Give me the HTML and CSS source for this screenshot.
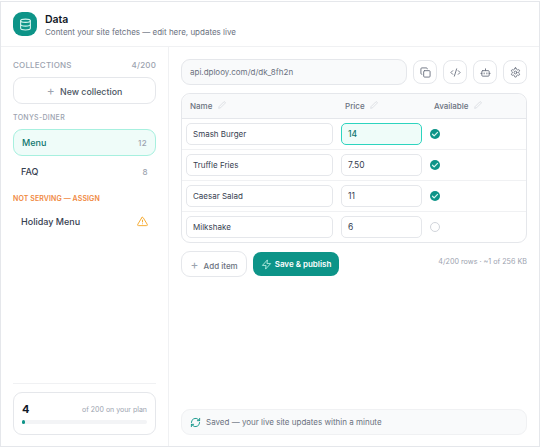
FILE: index.html
```html
<!DOCTYPE html>
<html lang="en">
<head>
  <meta charset="UTF-8">
  <title>Data</title>
  <link rel="stylesheet" href="styles.css">
</head>
<body>
  <div class="frame">
    <header class="top">
      <div class="logo">
        <svg width="13" height="13" viewBox="0 0 24 24" fill="none" stroke="#d7f5ee" stroke-width="2" stroke-linecap="round" stroke-linejoin="round"><ellipse cx="12" cy="5" rx="9" ry="3"/><path d="M3 5v14c0 1.700 4 3 9 3s9-1.300 9-3V5"/><path d="M3 12c0 1.700 4 3 9 3s9-1.300 9-3"/></svg>
      </div>
      <div class="top-text">
        <h1>Data</h1>
        <p>Content your site fetches — edit here, updates live</p>
      </div>
    </header>

    <div class="columns">
      <aside class="side">
        <div class="side-head"><span>COLLECTIONS</span><span>4/200</span></div>
        <button class="new-btn"><span class="plus">+</span> New collection</button>
        <div class="group-label">TONYS-DINER</div>
        <div class="item active"><span>Menu</span><span class="count">12</span></div>
        <div class="item"><span>FAQ</span><span class="count">8</span></div>
        <div class="group-label warn">NOT SERVING — ASSIGN</div>
        <div class="item">
          <span>Holiday Menu</span>
          <svg width="11" height="11" viewBox="0 0 24 24" fill="none" stroke="#f5a524" stroke-width="2" stroke-linecap="round" stroke-linejoin="round"><path d="M10.300 3.900 1.800 18a2 2 0 0 0 1.700 3h17a2 2 0 0 0 1.700-3L13.700 3.900a2 2 0 0 0-3.400 0z"/><path d="M12 9v4"/><path d="M12 17h.01"/></svg>
        </div>
        <div class="side-foot">
          <div class="plan">
            <div class="plan-row"><strong>4</strong><span>of 200 on your plan</span></div>
            <div class="track"><div class="fill" style="width:2%"></div></div>
          </div>
        </div>
      </aside>

      <main class="main">
        <div class="url-row">
          <div class="url">api.dplooy.com/d/dk_8fh2n</div>
          <button class="icon-btn">
            <svg width="11" height="11" viewBox="0 0 24 24" fill="none" stroke="#6b7280" stroke-width="2" stroke-linecap="round" stroke-linejoin="round"><rect x="8" y="8" width="14" height="14" rx="2"/><path d="M4 16a2 2 0 0 1-2-2V4a2 2 0 0 1 2-2h10a2 2 0 0 1 2 2"/></svg>
          </button>
          <button class="icon-btn">
            <svg width="11" height="11" viewBox="0 0 24 24" fill="none" stroke="#6b7280" stroke-width="2" stroke-linecap="round" stroke-linejoin="round"><path d="m18 16 4-4-4-4"/><path d="m6 8-4 4 4 4"/><path d="m14.500 4-5 16"/></svg>
          </button>
          <button class="icon-btn">
            <svg width="11" height="11" viewBox="0 0 24 24" fill="none" stroke="#6b7280" stroke-width="2" stroke-linecap="round" stroke-linejoin="round"><path d="M12 8V4"/><rect x="4" y="8" width="16" height="12" rx="2"/><path d="M2 14h2"/><path d="M20 14h2"/><path d="M15 13v2"/><path d="M9 13v2"/></svg>
          </button>
          <button class="icon-btn">
            <svg width="11" height="11" viewBox="0 0 24 24" fill="none" stroke="#6b7280" stroke-width="2" stroke-linecap="round" stroke-linejoin="round"><path d="M12.220 2h-.44a2 2 0 0 0-2 2v.18a2 2 0 0 1-1 1.730l-.43.25a2 2 0 0 1-2 0l-.15-.08a2 2 0 0 0-2.730.73l-.22.380a2 2 0 0 0 .730 2.730l.15.100a2 2 0 0 1 1 1.720v.51a2 2 0 0 1-1 1.740l-.15.090a2 2 0 0 0-.73 2.730l.22.380a2 2 0 0 0 2.730.730l.15-.08a2 2 0 0 1 2 0l.43.250a2 2 0 0 1 1 1.730V20a2 2 0 0 0 2 2h.44a2 2 0 0 0 2-2v-.18a2 2 0 0 1 1-1.730l.43-.25a2 2 0 0 1 2 0l.15.080a2 2 0 0 0 2.730-.730l.22-.39a2 2 0 0 0-.730-2.730l-.15-.08a2 2 0 0 1-1-1.740v-.5a2 2 0 0 1 1-1.740l.15-.09a2 2 0 0 0 .730-2.730l-.22-.38a2 2 0 0 0-2.730-.730l-.15.080a2 2 0 0 1-2 0l-.43-.25a2 2 0 0 1-1-1.730V4a2 2 0 0 0-2-2z"/><circle cx="12" cy="12" r="3"/></svg>
          </button>
        </div>

        <div class="table">
          <div class="row head">
            <div class="col-name">Name <svg class="pen" width="8" height="8" viewBox="0 0 24 24" fill="none" stroke="#d1d5db" stroke-width="2"><path d="M17 3a2.800 2.800 0 1 1 4 4L7.500 20.500 2 22l1.500-5.500z"/></svg></div>
            <div class="col-price">Price <svg class="pen" width="8" height="8" viewBox="0 0 24 24" fill="none" stroke="#d1d5db" stroke-width="2"><path d="M17 3a2.800 2.800 0 1 1 4 4L7.500 20.500 2 22l1.500-5.500z"/></svg></div>
            <div>Available <svg class="pen" width="8" height="8" viewBox="0 0 24 24" fill="none" stroke="#d1d5db" stroke-width="2"><path d="M17 3a2.800 2.800 0 1 1 4 4L7.500 20.500 2 22l1.500-5.500z"/></svg></div>
          </div>
          <div class="row">
            <div class="cell col-name">Smash Burger</div>
            <div class="cell col-price focus">14</div>
            <span class="check"><svg width="10" height="10" viewBox="0 0 24 24" fill="none" stroke="#d7f5ee" stroke-width="3" stroke-linecap="round" stroke-linejoin="round"><path d="M6 12.500l4 4L18 8"/></svg></span>
          </div>
          <div class="row">
            <div class="cell col-name">Truffle Fries</div>
            <div class="cell col-price">7.50</div>
            <span class="check"><svg width="10" height="10" viewBox="0 0 24 24" fill="none" stroke="#d7f5ee" stroke-width="3" stroke-linecap="round" stroke-linejoin="round"><path d="M6 12.500l4 4L18 8"/></svg></span>
          </div>
          <div class="row">
            <div class="cell col-name">Caesar Salad</div>
            <div class="cell col-price">11</div>
            <span class="check"><svg width="10" height="10" viewBox="0 0 24 24" fill="none" stroke="#d7f5ee" stroke-width="3" stroke-linecap="round" stroke-linejoin="round"><path d="M6 12.500l4 4L18 8"/></svg></span>
          </div>
          <div class="row">
            <div class="cell col-name">Milkshake</div>
            <div class="cell col-price">6</div>
            <span class="check off"></span>
          </div>
        </div>

        <div class="actions">
          <button class="add-btn"><span class="plus">+</span> Add item</button>
          <button class="save-btn">
            <svg width="11" height="11" viewBox="0 0 24 24" fill="none" stroke="#b6ece0" stroke-width="2" stroke-linejoin="round"><path d="M3 14 14 2l-1 8h8L10 22l1-8z"/></svg>
            Save &amp; publish
          </button>
          <span class="usage">4/200 rows · ~1 of 256 KB</span>
        </div>

        <div class="status">
          <svg width="11" height="11" viewBox="0 0 24 24" fill="none" stroke="#0d9488" stroke-width="2" stroke-linecap="round" stroke-linejoin="round"><path d="M3 12a9 9 0 0 1 15-6.700L21 8"/><path d="M21 3v5h-5"/><path d="M21 12a9 9 0 0 1-15 6.700L3 16"/><path d="M8 16H3v5"/></svg>
          Saved — your live site updates within a minute
        </div>
      </main>
    </div>
  </div>
</body>
</html>
```

FILE: styles.css
```css
* {
  box-sizing: border-box;
}

body {
  margin: 0;
  height: 448px;
  padding: 1px 0;
  font-family: Inter, "Liberation Sans", sans-serif;
  background-color: #fff;
  color: #374151;
}

button {
  font-family: inherit;
  background: #fff;
  cursor: pointer;
}

.frame {
  height: 100%;
  display: flex;
  flex-direction: column;
  border: 1px solid #e5e7eb;
}

.top {
  height: 45px;
  flex: none;
  display: flex;
  align-items: center;
  gap: 8px;
  padding: 0 12px;
  border-bottom: 1px solid #f0f1f3;
}

.logo {
  width: 24px;
  height: 24px;
  border-radius: 9px;
  background-color: #0d9488;
  display: flex;
  align-items: center;
  justify-content: center;
}

.top-text {
  padding-top: 2px;
}

.top h1 {
  margin: 0;
  font-size: 10.500px;
  font-weight: 600;
  line-height: 14px;
  color: #111827;
}

.top p {
  margin: 0;
  font-size: 8px;
  line-height: 11px;
  color: #6b7280;
}

.columns {
  flex: 1;
  display: flex;
  min-height: 0;
}

.side {
  width: 168px;
  flex: none;
  display: flex;
  flex-direction: column;
  padding: 13px 12px 11px;
  border-right: 1px solid #f0f1f3;
}

.side-head {
  display: flex;
  justify-content: space-between;
  font-size: 8px;
  line-height: 11px;
  letter-spacing: 0.2px;
  font-weight: 500;
  color: #9ca3af;
}

.new-btn {
  height: 27px;
  margin-top: 6px;
  border: 1px solid #e5e7eb;
  border-radius: 9px;
  font-size: 8.800px;
  font-weight: 500;
  color: #4b5563;
}

.plus {
  font-size: 12px;
  font-weight: 400;
  color: #9ca3af;
  margin-right: 3px;
}

.group-label {
  margin: 9px 0 7px;
  font-size: 7px;
  line-height: 9px;
  letter-spacing: 0.3px;
  font-weight: 500;
  color: #9ca3af;
}

.group-label.warn {
  margin: 8px 0 5px;
  letter-spacing: 0.1px;
  font-weight: 600;
  color: #f0883e;
}

.item {
  height: 27px;
  display: flex;
  align-items: center;
  justify-content: space-between;
  padding: 0 8px;
  font-size: 9px;
  font-weight: 500;
  color: #374151;
  border-radius: 9px;
  margin-bottom: 1px;
}

.item.active {
  background-color: #effcf9;
  border: 1px solid #a7f0df;
  color: #0f766e;
  margin-bottom: 2px;
}

.count {
  font-size: 8px;
  letter-spacing: 0.4px;
  color: #9ca3af;
}

.side-foot {
  margin-top: auto;
  padding-top: 8px;
  border-top: 1px solid #f0f1f3;
}

.plan {
  height: 43px;
  padding: 9px 8px 0;
  border: 1px solid #e5e7eb;
  border-radius: 9px;
}

.plan-row {
  display: flex;
  justify-content: space-between;
  align-items: center;
  font-size: 7px;
  color: #9ca3af;
}

.plan-row strong {
  font-size: 11px;
  font-weight: 700;
  color: #111827;
}

.track {
  height: 4px;
  margin-top: 4px;
  border-radius: 2px;
  background-color: #f3f4f6;
}

.fill {
  height: 100%;
  border-radius: 2px;
  background-color: #0d9488;
}

.main {
  flex: 1;
  display: flex;
  flex-direction: column;
  padding: 12px 12px 11px;
}

.url-row {
  display: flex;
  align-items: center;
  gap: 6px;
}

.url {
  flex: 1;
  height: 26px;
  display: flex;
  align-items: center;
  padding: 0 8px;
  font-size: 8px;
  color: #6b7280;
  background-color: #f9fafb;
  border: 1px solid #e5e7eb;
  border-radius: 9px;
}

.icon-btn {
  width: 24px;
  height: 24px;
  padding: 0;
  display: flex;
  align-items: center;
  justify-content: center;
  border: 1px solid #e5e7eb;
  border-radius: 8px;
}

.table {
  margin-top: 8px;
  border: 1px solid #e5e7eb;
  border-radius: 9px;
}

.row {
  height: 31px;
  display: flex;
  align-items: center;
  padding: 0 4px;
  border-bottom: 1px solid #f0f1f3;
}

.row:last-child {
  height: 30px;
  border-bottom: none;
}

.row.head {
  height: 25px;
  padding-left: 8px;
  font-size: 8px;
  font-weight: 500;
  color: #6b7280;
  background-color: #f9fafb;
  border-bottom-color: #e5e7eb;
  border-radius: 9px 9px 0 0;
}

.pen {
  margin-left: 3px;
}

.head .col-name {
  width: 155px;
}

.head .col-price {
  width: 89px;
}

.cell {
  height: 22px;
  display: flex;
  align-items: center;
  padding: 0 6px;
  font-size: 8px;
  color: #374151;
  border: 1px solid #e5e7eb;
  border-radius: 5px;
}

.cell.col-name {
  width: 147px;
  margin-right: 8px;
}

.cell.col-price {
  width: 81px;
  margin-right: 8px;
  font-size: 8.500px;
}

.cell.focus {
  background-color: #effcf9;
  border-color: #2dd4bf;
  color: #0f766e;
  font-weight: 500;
}

.check {
  width: 10px;
  height: 10px;
  border-radius: 50%;
  background-color: #0d9488;
  display: flex;
  align-items: center;
  justify-content: center;
}

.check.off {
  background: #fff;
  border: 1px solid #d1d5db;
}

.actions {
  margin-top: 8px;
  display: flex;
  align-items: center;
  gap: 6px;
}

.add-btn {
  height: 26px;
  padding: 0 8.500px;
  border: 1px solid #e5e7eb;
  border-radius: 9px;
  font-size: 8px;
  font-weight: 500;
  color: #6b7280;
}

.save-btn {
  height: 24px;
  display: flex;
  align-items: center;
  gap: 3px;
  padding: 0 7.500px;
  border: none;
  border-radius: 8px;
  background-color: #0d9488;
  color: #fff;
  font-size: 8px;
  font-weight: 600;
}

.usage {
  margin-left: auto;
  margin-bottom: 5px;
  font-size: 7.200px;
  color: #9ca3af;
}

.status {
  margin-top: auto;
  height: 26px;
  display: flex;
  align-items: center;
  gap: 5px;
  padding: 0 8px;
  font-size: 8px;
  color: #6b7280;
  background-color: #f9fafb;
  border: 1px solid #f0f1f3;
  border-radius: 9px;
}
```
